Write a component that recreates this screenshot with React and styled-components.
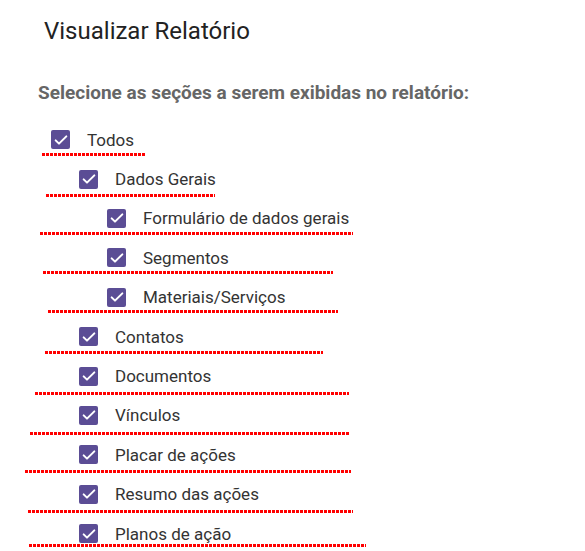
import styled, { createGlobalStyle } from "styled-components";

const GlobalStyle = createGlobalStyle`
    body {
        margin: 0;
        background-color: #ffffff;
        font-family: Roboto, 'Liberation Sans', sans-serif;
    }
`;

const Page = styled.div`
    width: 585px;
    height: 551px;
    overflow: hidden;
    box-sizing: border-box;
    padding-top: 16px;
`;

const Title = styled.h1`
    margin: 0 0 0 44px;
    font-size: 24px;
    font-weight: 400;
    line-height: 30px;
    color: #222222;
`;

const Subtitle = styled.h2`
    margin: 35px 0 0 38px;
    font-size: 19px;
    font-weight: 700;
    line-height: 24px;
    color: #666666;
`;

const List = styled.div`
    display: flex;
    flex-direction: column;
    margin-top: 15px;
`;

const Row = styled.label`
    position: relative;
    display: flex;
    align-items: center;
    gap: 17px;
    height: 39.4px;
    padding-left: ${(p) => 51 + p.$level * 28}px;
    font-size: 17px;
    color: #333333;
`;

const Box = styled.span`
    display: flex;
    align-items: center;
    justify-content: center;
    width: 19px;
    height: 19px;
    border-radius: 2px;
    background-color: #5b4d95;
    flex-shrink: 0;
`;

const Squiggle = styled.span`
    position: absolute;
    left: ${(p) => p.$x}px;
    width: ${(p) => p.$w}px;
    top: calc(50% + ${(p) => p.$dy}px - 1.5px);
    height: 3px;
    background: repeating-linear-gradient(90deg, #ff0000 0 3px, transparent 3px 4px);
`;

const Check = () => (
    <svg width="16" height="16" viewBox="0 0 24 24">
        <path d="M4 12.5l5 5L20 6.5" fill="none" stroke="#ffffff" strokeWidth="3" strokeLinecap="round" strokeLinejoin="round" />
    </svg>
);

const items = [
    { label: "Todos", level: 0, x: 42, w: 104, dy: 15 },
    { label: "Dados Gerais", level: 1, x: 46, w: 169, dy: 16 },
    { label: "Formulário de dados gerais", level: 2, x: 40, w: 313, dy: 15 },
    { label: "Segmentos", level: 2, x: 43, w: 290, dy: 15 },
    { label: "Materiais/Serviços", level: 2, x: 48, w: 290, dy: 14 },
    { label: "Contatos", level: 1, x: 45, w: 278, dy: 16 },
    { label: "Documentos", level: 1, x: 35, w: 314, dy: 17 },
    { label: "Vínculos", level: 1, x: 30, w: 320, dy: 18 },
    { label: "Placar de ações", level: 1, x: 25, w: 326, dy: 17 },
    { label: "Resumo das ações", level: 1, x: 28, w: 325, dy: 17 },
    { label: "Planos de ação", level: 1, x: 29, w: 337, dy: 12 },
];

const App = () => {
    return <Page>
        <GlobalStyle />
        <Title>Visualizar Relatório</Title>
        <Subtitle>Selecione as seções a serem exibidas no relatório:</Subtitle>
        <List>
            {items.map((it) => (
                <Row key={it.label} $level={it.level}>
                    <Box><Check /></Box>
                    <span>{it.label}</span>
                    <Squiggle $x={it.x} $w={it.w} $dy={it.dy} />
                </Row>
            ))}
        </List>
    </Page>
}

export default App;
